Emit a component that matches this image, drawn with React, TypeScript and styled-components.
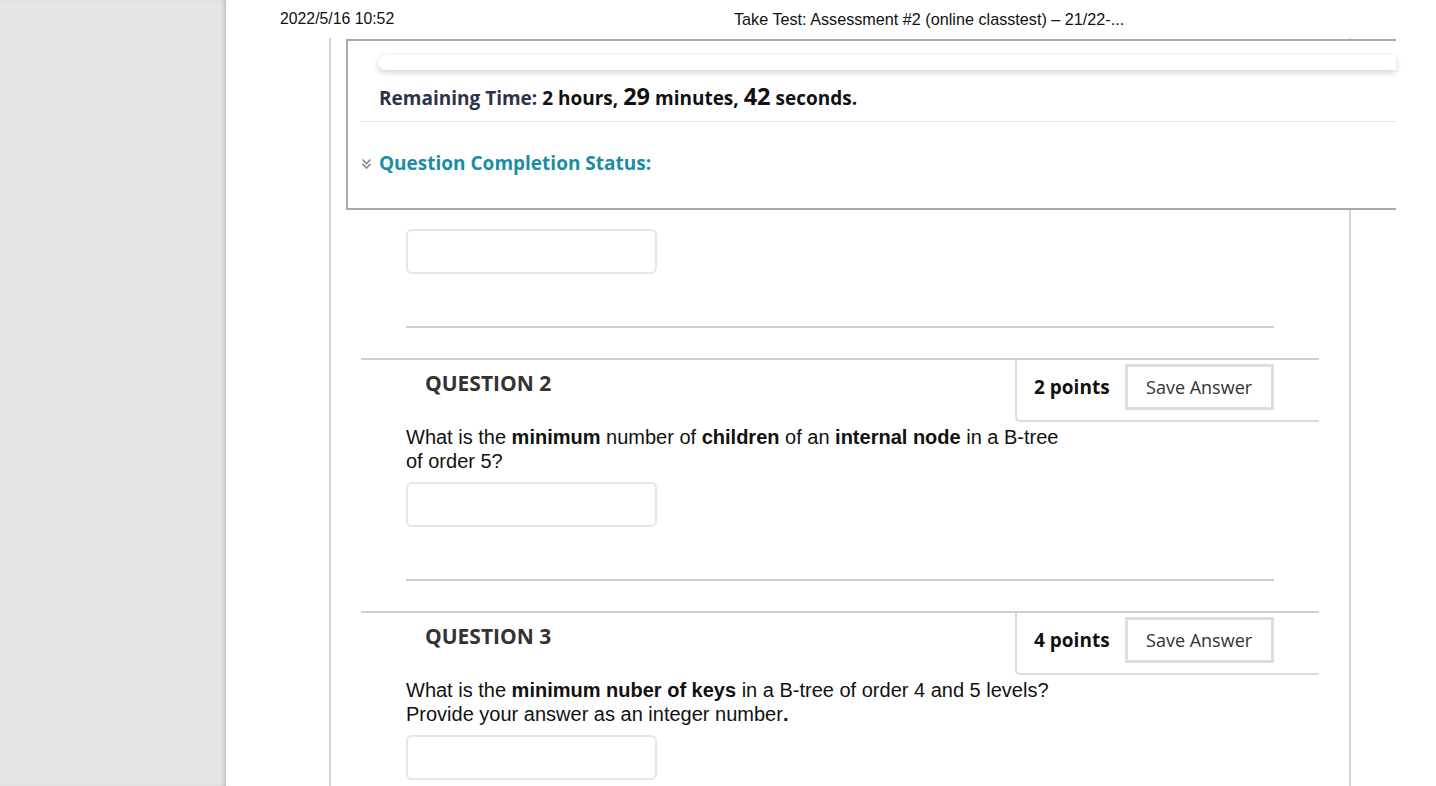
import styled, { createGlobalStyle } from "styled-components";

const GlobalStyle = createGlobalStyle`
  html, body {
    margin: 0;
    padding: 0;
    background: #ffffff;
  }
  body {
    font-family: "Liberation Sans", Arial, sans-serif;
    overflow: hidden;
  }
`;

interface Question {
  number: number;
  points: number;
  text: React.ReactNode;
}

const questions: Question[] = [
  {
    number: 2,
    points: 2,
    text: (
      <>
        What is the <b>minimum</b> number of <b>children</b> of an <b>internal node</b> in a
        B-tree of order 5?
      </>
    ),
  },
  {
    number: 3,
    points: 4,
    text: (
      <>
        What is the <b>minimum nuber of keys</b> in a B-tree of order 4 and 5 levels?
        <br />
        Provide your answer as an integer number<b>.</b>
      </>
    ),
  },
];

const ChevronsDown = () => (
  <svg width="11" height="12" viewBox="0 0 11 12" fill="none">
    <path d="M1.5 1.5 L5.5 5.5 L9.5 1.5" stroke="#8a8a8a" strokeWidth="1.7" />
    <path d="M1.5 6 L5.5 10 L9.5 6" stroke="#8a8a8a" strokeWidth="1.7" />
  </svg>
);

const QuestionBlock = ({ q }: { q: Question }) => {
  return (
    <QuestionStyle>
      <div className="q-header">
        <h3 className="q-title">QUESTION {q.number}</h3>
        <PointsBox>
          <span className="points">{q.points} points</span>
          <SaveButton>Save Answer</SaveButton>
        </PointsBox>
      </div>
      <div className="q-body">
        <QuestionText>{q.text}</QuestionText>
        <AnswerInput type="text" />
        <Rule />
      </div>
    </QuestionStyle>
  );
};

const App = () => {
  return (
    <>
      <GlobalStyle />
      <Page>
        <Sidebar />
        <Main>
          <PrintHeader>
            <span className="date">2022/5/16 10:52</span>
            <span className="title">Take Test: Assessment #2 (online classtest) – 21/22-...</span>
          </PrintHeader>
          <Frame>
            <TimerPanel>
              <div className="bar" />
              <div className="remaining">
                <span className="label">Remaining Time:</span> 2 hours, <span className="big">29</span>{" "}
                minutes, <span className="big">42</span> seconds.
              </div>
              <div className="status">
                <ChevronsDown />
                <span>Question Completion Status:</span>
              </div>
            </TimerPanel>
            <PrevAnswer>
              <AnswerInput type="text" />
              <Rule />
            </PrevAnswer>
            {questions.map((q) => (
              <QuestionBlock key={q.number} q={q} />
            ))}
          </Frame>
        </Main>
      </Page>
    </>
  );
};

const Page = styled.div`
  display: flex;
  height: 100vh;
  overflow: hidden;
`;

const Sidebar = styled.aside`
  flex: 0 0 226px;
  background: #e5e5e5;
  box-shadow: inset -4px 0 4px -2px rgba(0, 0, 0, 0.18);
`;

const Main = styled.main`
  flex: 1;
  display: flex;
  flex-direction: column;
  background: #ffffff;
  min-width: 0;
`;

const PrintHeader = styled.header`
  flex-shrink: 0;
  display: flex;
  align-items: center;
  height: 38px;
  padding-left: 54px;
  font-size: 15.8px;
  color: #111;

  .date {
    width: 454px;
  }

  .title {
    font-size: 16.2px;
  }
`;

const Frame = styled.div`
  flex: 1 0 auto;
  margin-left: 103px;
  width: 1018px;
  border-left: 2px solid #d4d4d4;
  border-right: 2px solid #d4d4d4;
`;

const TimerPanel = styled.section`
  margin: 1px 0 0 15px;
  width: 1048px;
  height: 167px;
  background: #ffffff;
  border: 2px solid #a9a9a9;
  border-right: none;
  font-family: "Open Sans", sans-serif;
  font-weight: 700;
  font-size: 19px;

  .bar {
    margin: 14px 0 0 30px;
    height: 15px;
    border-radius: 8px 0 0 8px;
    background: #ffffff;
    box-shadow: 0 3px 6px rgba(0, 0, 0, 0.16), 0 -1px 3px rgba(0, 0, 0, 0.04);
  }

  .remaining {
    margin: 14px 0 0 12px;
    padding-left: 19px;
    height: 37px;
    line-height: 24px;
    color: #111;
    border-bottom: 1px solid #e4e4e4;
  }

  .label {
    color: #29344a;
  }

  .big {
    font-size: 23.5px;
  }

  .status {
    display: flex;
    align-items: center;
    gap: 7px;
    margin: 29px 0 0 13px;
    color: #1a8da6;
    line-height: 24px;

    svg {
      margin-top: 2px;
    }
  }
`;

const PrevAnswer = styled.div`
  padding: 19px 75px 0 75px;
`;

const AnswerInput = styled.input`
  display: block;
  box-sizing: border-box;
  width: 251px;
  height: 45px;
  border: 2px solid #e6e6e6;
  border-radius: 6px;
  background: #fff;
  outline: none;
`;

const Rule = styled.hr`
  margin: 52px 0 0;
  border: none;
  border-top: 2px solid #cfcfcf;
`;

const QuestionStyle = styled.div`
  margin: 30px 30px 0 30px;
  border-top: 2px solid #cfcfcf;

  .q-header {
    display: flex;
    justify-content: space-between;
    align-items: flex-start;
  }

  .q-title {
    margin: 11px 0 0 64px;
    font-family: "Open Sans", sans-serif;
    font-weight: 700;
    font-size: 21px;
    line-height: 24px;
    color: #333;
  }

  .q-body {
    padding: 3px 45px 0 45px;
  }
`;

const PointsBox = styled.div`
  display: flex;
  align-items: center;
  gap: 15px;
  width: 304px;
  box-sizing: border-box;
  height: 62px;
  padding: 0 0 6px 17px;
  border-left: 2px solid #dcdcdc;
  border-bottom: 2px solid #dcdcdc;
  border-bottom-left-radius: 5px;
  font-family: "Open Sans", sans-serif;

  .points {
    font-weight: 700;
    font-size: 19px;
    color: #111;
  }
`;

const SaveButton = styled.button`
  box-sizing: border-box;
  width: 149px;
  height: 46px;
  border: 3px solid #dddddd;
  background: #fff;
  font-family: "Open Sans", sans-serif;
  font-size: 18px;
  color: #333;
  padding: 0;
`;

const QuestionText = styled.p`
  margin: 0 0 9px;
  max-width: 665px;
  font-size: 20px;
  line-height: 24px;
  color: #111;

  b {
    font-weight: 700;
  }
`;

export default App;
